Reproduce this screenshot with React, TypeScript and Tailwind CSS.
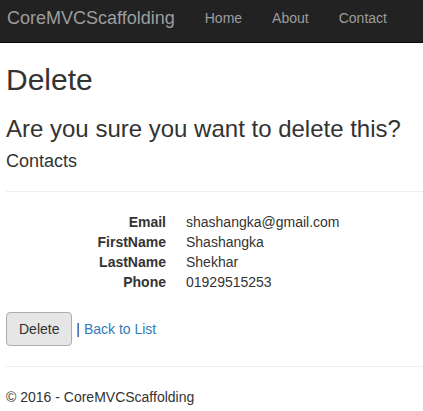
export default function App() {
    const fields = [
        { label: 'Email', value: 'shashangka@gmail.com' },
        { label: 'FirstName', value: 'Shashangka' },
        { label: 'LastName', value: 'Shekhar' },
        { label: 'Phone', value: '01929515253' },
    ];

    return (
        <div className="min-h-[411px] bg-white font-['Liberation_Sans',Arial,sans-serif] text-[14px] leading-[20px] text-[#333]">
            {/* Navbar */}
            <nav className="flex h-[43px] border-b border-[#080808] bg-[#222]">
                <a className="pl-[7px] pr-[15px] pt-[8px] text-[18px] leading-[20px] text-[#9d9d9d]">
                    CoreMVCScaffolding
                </a>
                <ul className="flex">
                    <li><a className="block px-[15px] pt-[8px] text-[#9d9d9d]">Home</a></li>
                    <li><a className="block px-[15px] pt-[8px] text-[#9d9d9d]">About</a></li>
                    <li><a className="block px-[15px] pt-[8px] text-[#9d9d9d]">Contact</a></li>
                </ul>
            </nav>

            {/* Body content */}
            <div className="pl-[6px]">
                <h2 className="mt-[20px] text-[30px] leading-[33px] font-normal">Delete</h2>
                <h3 className="mt-[20px] text-[24px] leading-[26px] font-normal">Are you sure you want to delete this?</h3>
                <div>
                    <h4 className="mt-[9px] text-[18px] leading-[20px] font-normal">Contacts</h4>
                    <hr className="mt-[20px] border-t border-[#eee]" />
                    <dl className="mt-[20px] grid grid-cols-[160px_1fr] gap-x-[20px]">
                        {fields.map((f) => (
                            <div key={f.label} className="contents">
                                <dt className="text-right font-bold">{f.label}</dt>
                                <dd>{f.value}</dd>
                            </div>
                        ))}
                    </dl>

                    <form className="mt-[20px] flex items-center">
                        <button
                            type="button"
                            className="h-[34px] rounded-[4px] border border-[#adadad] bg-[#e6e6e6] px-[12px] text-[#333]"
                        >
                            Delete
                        </button>
                        <span className="whitespace-pre"> | </span>
                        <a className="text-[#337ab7]">Back to List</a>
                    </form>
                </div>

                <hr className="mt-[20px] border-t border-[#eee]" />
                <footer>
                    <p className="mt-[20px]">&copy; 2016 - CoreMVCScaffolding</p>
                </footer>
            </div>
        </div>
    );
}
